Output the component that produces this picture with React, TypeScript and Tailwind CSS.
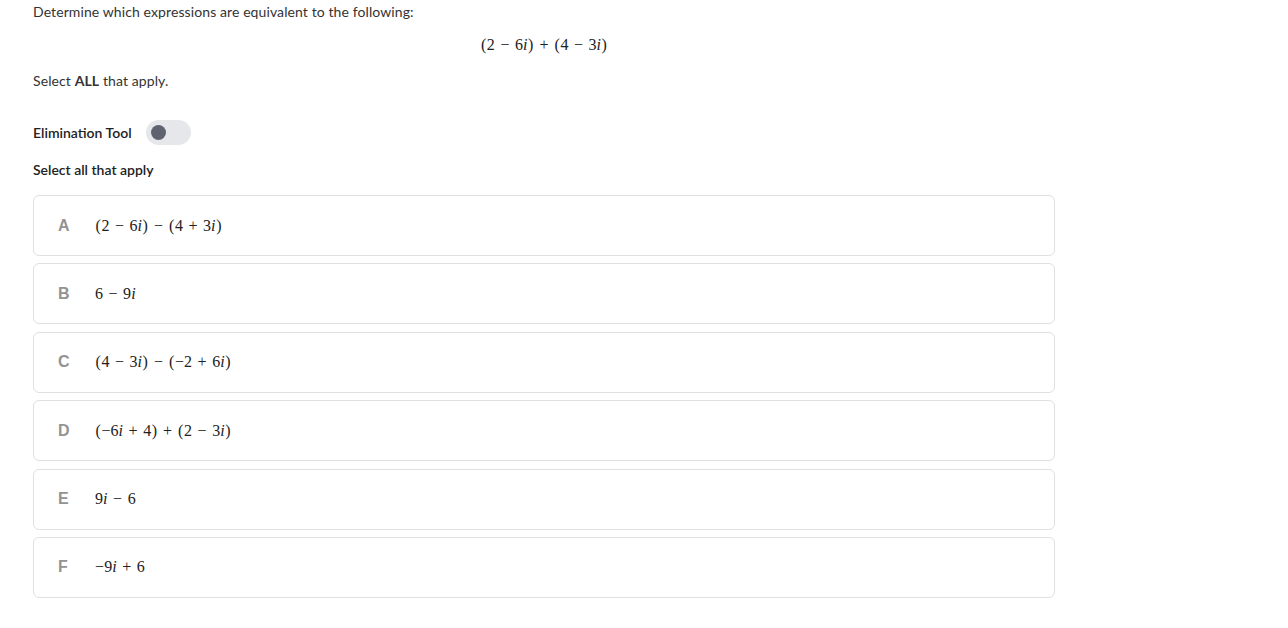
import { useState } from "react";

// renders a tiny latex-ish expression: italic i, spaced binary operators
const MathExpr = ({ expr, className = "" }: { expr: string; className?: string }) => {
  const parts: React.ReactNode[] = [];
  const chars = expr.replace(/ /g, "").split("");
  chars.forEach((ch, i) => {
    const prev = chars[i - 1];
    if (ch === "i") {
      parts.push(
        <span key={i} className="italic">
          i
        </span>
      );
    } else if ((ch === "−" || ch === "+") && prev !== undefined && prev !== "(") {
      parts.push(
        <span key={i} className="mx-[0.34em]">
          {ch}
        </span>
      );
    } else if (ch === "(" || ch === ")") {
      parts.push(
        <span key={i} className="mx-[0.03em]">
          {ch}
        </span>
      );
    } else {
      parts.push(<span key={i}>{ch}</span>);
    }
  });
  return (
    <span
      className={`text-[16px] text-[#222] whitespace-nowrap ${className}`}
      style={{ fontFamily: '"Liberation Serif", "DejaVu Serif", serif' }}
    >
      {parts}
    </span>
  );
};

const options = [
  { key: "A", expr: "(2 − 6i) − (4 + 3i)" },
  { key: "B", expr: "6 − 9i" },
  { key: "C", expr: "(4 − 3i) − (−2 + 6i)" },
  { key: "D", expr: "(−6i + 4) + (2 − 3i)" },
  { key: "E", expr: "9i − 6" },
  { key: "F", expr: "−9i + 6" },
];

const Toggle = ({ on, onClick }: { on: boolean; onClick: () => void }) => (
  <button
    onClick={onClick}
    className="w-[45px] h-[25px] rounded-full bg-[#e5e7eb] flex items-center px-[5px]"
  >
    <span className={`w-[15px] h-[15px] rounded-full bg-[#5f6370] ${on ? "ml-auto" : ""}`} />
  </button>
);

export default function App() {
  const [elim, setElim] = useState(false);
  const [picked, setPicked] = useState<string[]>([]);

  const toggle = (k: string) =>
    setPicked((p) => (p.includes(k) ? p.filter((x) => x !== k) : [...p, k]));

  return (
    <div
      className="w-[1288px] h-[628px] bg-white pl-[33px] pt-[4px] text-[14px] tracking-[0.1px] text-[#333]"
      style={{ fontFamily: 'Lato, "Open Sans", sans-serif' }}
    >
      <div className="w-[1022px]">
        <p className="leading-[16px]">Determine which expressions are equivalent to the following:</p>
        <div className="flex justify-center mt-[16px] leading-[18px]">
          <MathExpr expr="(2 − 6i) + (4 − 3i)" />
        </div>
        <p className="mt-[19px] leading-[16px]">
          Select <span className="font-bold">ALL</span> that apply.
        </p>

        <div className="flex items-center gap-[14px] mt-[31px]">
          <span className="font-semibold tracking-normal text-[#222]">Elimination Tool</span>
          <Toggle on={elim} onClick={() => setElim(!elim)} />
        </div>

        <p className="mt-[17px] leading-[16px] font-semibold tracking-normal text-[#222]">
          Select all that apply
        </p>

        <div className="flex flex-col gap-[7.4px] mt-[17px]">
          {options.map((o) => (
            <button
              key={o.key}
              onClick={() => toggle(o.key)}
              className={`h-[61px] w-full rounded-[6px] border text-left flex items-center pl-[24px] ${
                picked.includes(o.key) ? "border-[#5b8def]" : "border-[#e0e0e0]"
              }`}
            >
              <span
                className="w-[37px] text-[16px] font-bold text-[#939393]"
                style={{ fontFamily: '"Liberation Sans", Arial, sans-serif' }}
              >
                {o.key}
              </span>
              <MathExpr expr={o.expr} />
            </button>
          ))}
        </div>
      </div>
    </div>
  );
}
